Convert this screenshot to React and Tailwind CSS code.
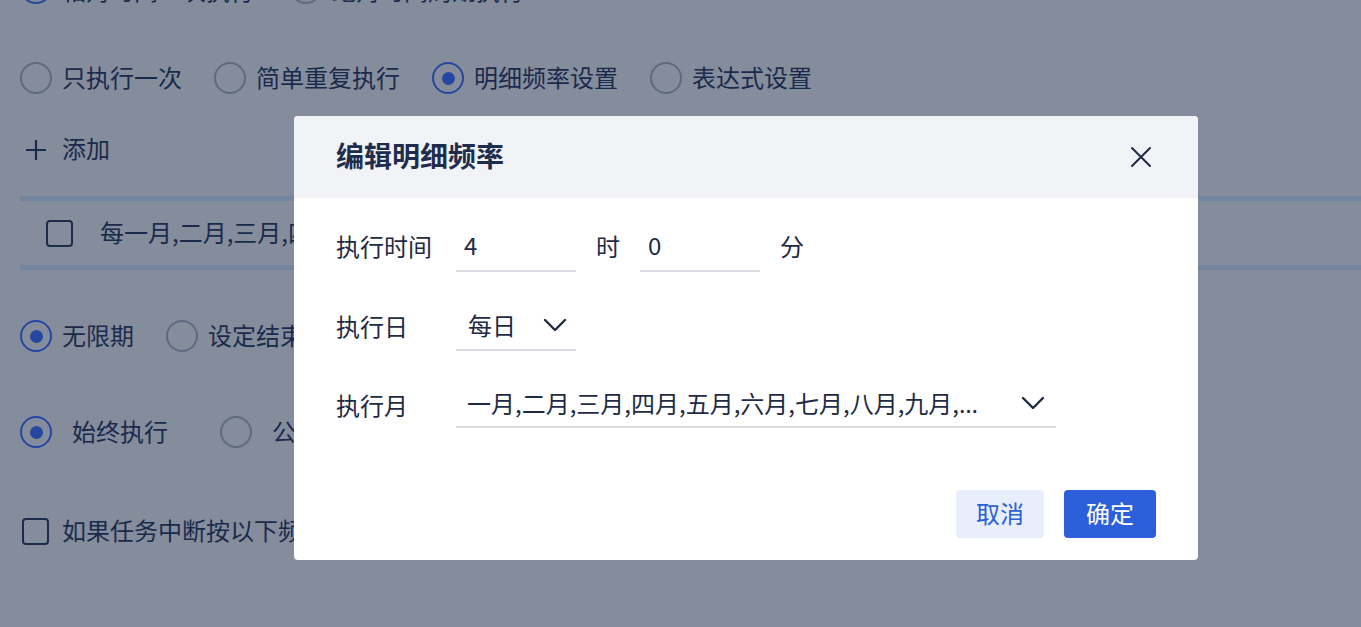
import { useState } from "react";

const font = { fontFamily: '"Noto Sans CJK SC", "Noto Sans", sans-serif' };

const Radio = ({ checked }) => (
  <span
    className={`w-[32px] h-[32px] rounded-full border-2 flex items-center justify-center flex-shrink-0 ${
      checked ? "border-[#2447a2]" : "border-[#5e6a80]"
    }`}
  >
    {checked && <span className="w-[13px] h-[13px] rounded-full bg-[#2447a2]" />}
  </span>
);

const Box = () => (
  <span className="w-[27px] h-[27px] rounded-[4px] border-2 border-[#1d2b4b] flex-shrink-0" />
);

const Chevron = () => (
  <svg width="24" height="14" viewBox="0 0 24 14" fill="none">
    <polyline points="2,2 12,12 22,2" stroke="#1f2b45" strokeWidth="2.4" strokeLinecap="round" strokeLinejoin="round" />
  </svg>
);

const Option = ({ checked, label, gap = "ml-[10px]", after = "mr-[32px]", lift = "mb-[3px]" }) => (
  <div className={`flex items-center ${after}`}>
    <Radio checked={checked} />
    <span className={`${gap} ${lift} whitespace-nowrap`}>{label}</span>
  </div>
);

const App = () => {
  const [hour] = useState("4");
  const [minute] = useState("0");

  return (
    <div className="w-[1361px] h-[627px] overflow-hidden bg-[#858d9c] text-[#1b2a4c] text-[24px] relative" style={font}>
      <div className="pl-[20px] flex flex-col">
        {/* top row, cut off */}
        <div className="flex items-center h-[32px] mt-[-28px]">
          <Option checked label="相对时间一次执行" after="mr-[36px]" lift="mt-[4px]" />
          <Option label="绝对时间周期执行" lift="mt-[4px]" />
        </div>

        <div className="flex items-center h-[32px] mt-[58px]">
          <Option label="只执行一次" />
          <Option label="简单重复执行" />
          <Option checked label="明细频率设置" />
          <Option label="表达式设置" />
        </div>

        <div className="flex items-center h-[32px] mt-[40px]">
          <svg width="22" height="22" viewBox="0 0 22 22" className="ml-[5px]">
            <path d="M11 1v20M1 11h20" stroke="#1b2a4c" strokeWidth="2.2" />
          </svg>
          <span className="ml-[15px] mb-[4px]">添加</span>
        </div>

        <div className="mt-[30px] border-y-[5px] border-[#72849e]">
          <div className="h-[64px] flex items-center pl-[26px]">
            <Box />
            <span className="ml-[27px] mb-[3px] whitespace-nowrap">每一月,二月,三月,四月,五月,六月,七月,八月,九月,十月,十一月,十二月 每日 4:00</span>
          </div>
        </div>

        <div className="flex items-center h-[32px] mt-[50px]">
          <Option label="无限期" checked />
          <Option label="设定结束时间" />
        </div>

        <div className="flex items-center h-[32px] mt-[64px]">
          <Option checked label="始终执行" gap="ml-[20px]" after="mr-[52px]" />
          <Option label="公休日不执行" gap="ml-[20px]" />
        </div>

        <div className="flex items-center h-[32px] mt-[67px] pl-[2px]">
          <Box />
          <span className="ml-[13px] mb-[3px]">如果任务中断按以下频率重试</span>
        </div>
      </div>

      {/* dialog */}
      <div className="absolute left-[294px] top-[116px] w-[904px] h-[444px] bg-white rounded-[4px] overflow-hidden flex flex-col text-[#1f2b45]">
        <div className="h-[82px] bg-[#f2f3f7] flex items-center justify-between pl-[42px] pr-[46px] flex-shrink-0">
          <span className="font-bold text-[28px] text-[#1f2d4d] mb-[4px]">编辑明细频率</span>
          <svg width="22" height="22" viewBox="0 0 22 22">
            <path d="M2 2l18 18M20 2L2 20" stroke="#1f2b45" strokeWidth="2" strokeLinecap="round" />
          </svg>
        </div>

        <div className="flex-1 flex flex-col px-[42px] pt-[32px]">
          <div className="flex items-center h-[42px]">
            <span className="w-[120px] mb-[10px]">执行时间</span>
            <div className="w-[120px] h-[42px] border-b-2 border-[#d8dbe2] flex items-center pl-[8px] pb-[10px]">{hour}</div>
            <span className="ml-[20px] w-[20px] mb-[10px]">时</span>
            <div className="ml-[24px] w-[120px] h-[42px] border-b-2 border-[#d8dbe2] flex items-center pl-[8px] pb-[10px]">{minute}</div>
            <span className="ml-[20px] mb-[10px]">分</span>
          </div>

          <div className="flex items-center h-[42px] mt-[37px]">
            <span className="w-[120px] mb-[8px]">执行日</span>
            <div className="w-[120px] h-[42px] border-b-2 border-[#d8dbe2] flex items-center pl-[12px] gap-[27px] pb-[8px]">
              <span>每日</span>
              <Chevron />
            </div>
          </div>

          <div className="flex items-center h-[42px] mt-[35px]">
            <span className="w-[120px] mb-[4px]">执行月</span>
            <div className="w-[600px] h-[42px] border-b-2 border-[#d8dbe2] flex items-center justify-between pl-[11px] pr-[11px] pb-[6px]">
              <span className="truncate">
                一月,二月,三月,四月,五月,六月,七月,八月,九月,
                <span style={{ fontFamily: '"Noto Sans", sans-serif' }}>…</span>
              </span>
              <Chevron />
            </div>
          </div>

          <div className="flex justify-end gap-[20px] mt-[62px]">
            <button className="w-[88px] h-[48px] rounded-[4px] bg-[#e8eefb] text-[#2c5fd6] pb-[3px]">取消</button>
            <button className="w-[92px] h-[48px] rounded-[4px] bg-[#2c5fd9] text-white pb-[3px]">确定</button>
          </div>
        </div>
      </div>
    </div>
  );
};

export default App;
